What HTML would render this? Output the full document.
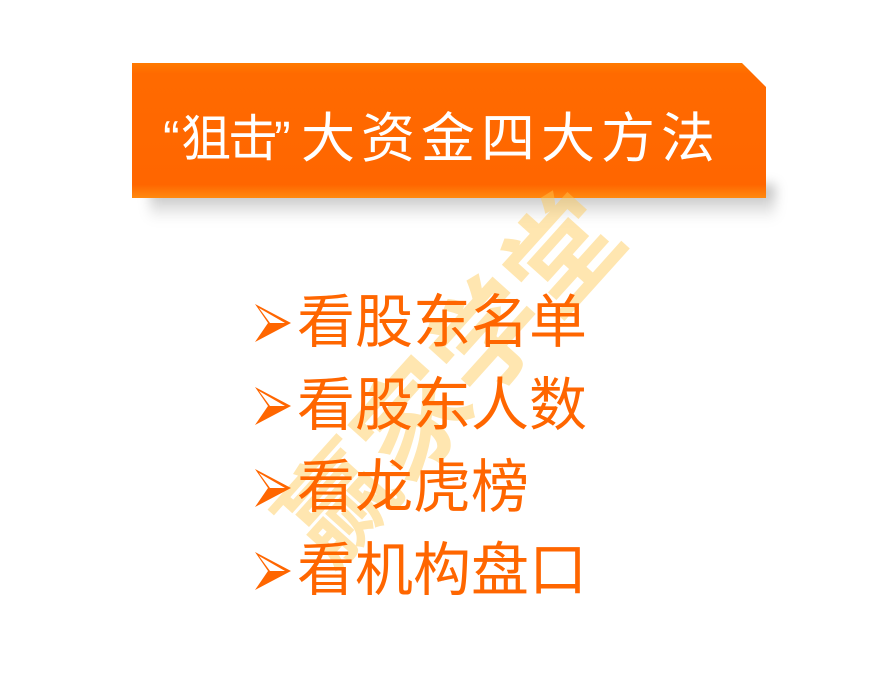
<!DOCTYPE html>
<html><head><meta charset="utf-8"><style>
body{margin:0;width:883px;height:687px;background:#fff;overflow:hidden;position:relative;font-family:"Liberation Sans","Noto Sans CJK SC",sans-serif}
.box{position:absolute;left:132px;top:63px;width:634px;height:135px;background:linear-gradient(#ff7a00,#ff6a00 8%,#ff6600 90%,#ff8a10);clip-path:polygon(0 0,610px 0,634px 24px,634px 135px,0 135px);}
.shadow{position:absolute;left:150px;top:185px;width:625px;height:35px;background:linear-gradient(rgba(0,0,0,0.3),rgba(0,0,0,0));filter:blur(6px)}
.t{position:absolute;top:104px;color:#fff;line-height:70px;white-space:nowrap}
.wm{position:absolute;left:235px;top:485px;font-size:110px;font-weight:bold;color:rgba(255,200,80,0.45);transform:rotate(-48deg);transform-origin:left top;white-space:nowrap;letter-spacing:2px}
.item{position:absolute;left:297px;font-size:58px;line-height:60px;color:#ff6600;white-space:nowrap}
.ar{position:absolute;left:254px;width:38px;height:42px}
</style></head><body>
<div class="shadow"></div>
<div class="box"></div>
<div class="t" style="left:163px;font-size:50px">“</div>
<div class="t" style="left:181px;font-size:50px;letter-spacing:-3px">狙击</div>
<div class="t" style="left:274px;font-size:50px">”</div>
<div class="t" style="left:301px;font-size:54px;letter-spacing:6px">大资金四大方法</div>
<div class="wm">赢家学堂</div>
<div class="item" style="top:293px">看股东名单</div>
<div class="item" style="top:376px">看股东人数</div>
<div class="item" style="top:458px">看龙虎榜</div>
<div class="item" style="top:541px">看机构盘口</div>
<svg class="ar" style="top:302px" viewBox="0 0 38 42"><path d="M1 2 L37 21 L1 40 L14 21 Z" fill="#ff6600"/><path d="M5 6 L31 21 L16 21 Z" fill="#fff"/></svg>
<svg class="ar" style="top:385px" viewBox="0 0 38 42"><path d="M1 2 L37 21 L1 40 L14 21 Z" fill="#ff6600"/><path d="M5 6 L31 21 L16 21 Z" fill="#fff"/></svg>
<svg class="ar" style="top:467px" viewBox="0 0 38 42"><path d="M1 2 L37 21 L1 40 L14 21 Z" fill="#ff6600"/><path d="M5 6 L31 21 L16 21 Z" fill="#fff"/></svg>
<svg class="ar" style="top:550px" viewBox="0 0 38 42"><path d="M1 2 L37 21 L1 40 L14 21 Z" fill="#ff6600"/><path d="M5 6 L31 21 L16 21 Z" fill="#fff"/></svg>
</body></html>
